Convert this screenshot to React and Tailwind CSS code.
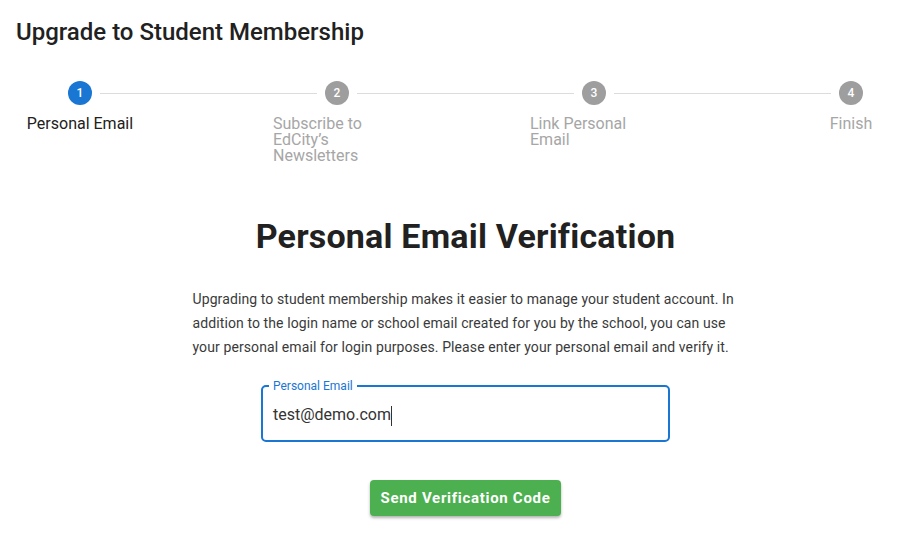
import React from 'react';

const steps = [
    { n: 1, label: 'Personal Email' },
    { n: 2, label: "Subscribe to EdCity’s Newsletters" },
    { n: 3, label: 'Link Personal Email' },
    { n: 4, label: 'Finish' },
];

const Step = ({ n, label, active }) => (
    <div className="w-[128px] shrink-0 flex flex-col items-center">
        <div className={`w-6 h-6 rounded-full flex items-center justify-center text-white text-[12px] font-medium ${active ? 'bg-[#1976d2]' : 'bg-[#9e9e9e]'}`}>
            {n}
        </div>
        <div className={`mt-[11px] text-[16px] leading-[16px] text-left ${active ? 'text-[#212121]' : 'text-[#a6a6a6]'}`}>
            {label}
        </div>
    </div>
);

const App = () => {
    return (
        <div className="w-[910px] h-[555px] overflow-hidden bg-white font-['Roboto',sans-serif]">
            <div className="w-[899px] ml-4">
                <h1 className="pt-[18px] text-[24px] leading-[28px] font-medium text-[#212121]">Upgrade to Student Membership</h1>

                <div className="mt-[35px] flex items-start">
                    {steps.map((s, i) => (
                        <React.Fragment key={s.n}>
                            {i > 0 && (
                                <div className="w-[129px] shrink-0 h-6 flex items-center">
                                    <div className="h-px -mx-[44px] flex-1 bg-[#dcdcdc]" />
                                </div>
                            )}
                            <Step {...s} active={i === 0} />
                        </React.Fragment>
                    ))}
                </div>

                <div className="flex flex-col items-center">
                    <h2 className="mt-[52px] text-[34px] leading-[40px] font-bold tracking-[0.2px] text-[#212121]">Personal Email Verification</h2>

                    <p className="mt-[31px] w-[546px] text-[14px] leading-[24px] tracking-[0.1px] text-[#3a3a3a]">
                        Upgrading to student membership makes it easier to manage your student account. In addition to the login name or school email created for you by the school, you can use your personal email for login purposes. Please enter your personal email and verify it.
                    </p>

                    <div className="relative mt-[26px] w-[409px] h-[57px] rounded-[5px] border-2 border-[#1976d2] flex items-center px-[10px]">
                        <span className="absolute -top-[9px] left-[6px] bg-white px-[4px] text-[12px] leading-[16px] text-[#1976d2]">Personal Email</span>
                        <span className="text-[16px] text-[#333] pt-[2px]">test@demo.com</span>
                        <span className="w-px h-[20px] bg-[#333] mt-[4px]" />
                    </div>

                    <button className="mt-[38px] h-[36px] px-[10px] rounded-[4px] bg-[#4caf50] text-white text-[15px] font-bold tracking-[0.7px] shadow-[0_2px_3px_rgba(0,0,0,0.3)]">
                        Send Verification Code
                    </button>
                </div>
            </div>
        </div>
    );
};

export default App;
